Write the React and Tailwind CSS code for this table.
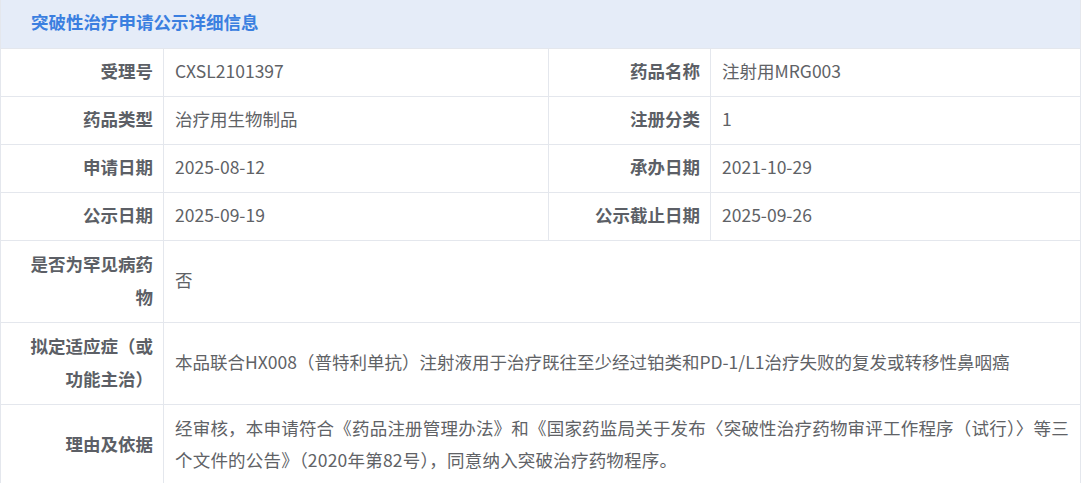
import React from "react";

const font = { fontFamily: '"Noto Sans CJK SC", "Noto Sans", sans-serif' };

function Label({ children, className = "" }) {
  return (
    <div
      className={`flex items-center justify-end text-right border-r border-b border-[#e4e7ed] pl-[20px] pr-[10px] pb-[4px] font-bold text-[#5c5f66] leading-[33px] ${className}`}
    >
      <div>{children}</div>
    </div>
  );
}

function Value({ children, className = "", last = false }) {
  return (
    <div
      className={`flex items-center border-b border-[#e4e7ed] pl-[11px] pr-[8px] pb-[4px] text-[#606266] leading-[32px] ${last ? "" : "border-r"} ${className}`}
    >
      <div>{children}</div>
    </div>
  );
}

export default function App() {
  return (
    <div className="bg-white w-[1089px] h-[483px] overflow-hidden" style={font}>
      <div className="w-[1081px] border-l border-r border-[#e4e7ed] text-[17.5px]">
        <div className="h-[49px] bg-[#e5ecf8] border-b border-[#e4e7ed] flex items-center pl-[30px] pb-[4px] font-bold text-[#3b7fe0] text-[17.5px]">
          突破性治疗申请公示详细信息
        </div>
        <div className="grid grid-cols-[163px_385px_162px_369px] auto-rows-min">
          <Label className="h-[48px]">受理号</Label>
          <Value className="h-[48px]">CXSL2101397</Value>
          <Label className="h-[48px]">药品名称</Label>
          <Value className="h-[48px]" last>注射用MRG003</Value>

          <Label className="h-[48px]">药品类型</Label>
          <Value className="h-[48px]">治疗用生物制品</Value>
          <Label className="h-[48px]">注册分类</Label>
          <Value className="h-[48px]" last>1</Value>

          <Label className="h-[48px]">申请日期</Label>
          <Value className="h-[48px]">2025-08-12</Value>
          <Label className="h-[48px]">承办日期</Label>
          <Value className="h-[48px]" last>2021-10-29</Value>

          <Label className="h-[48px]">公示日期</Label>
          <Value className="h-[48px]">2025-09-19</Value>
          <Label className="h-[48px]">公示截止日期</Label>
          <Value className="h-[48px]" last>2025-09-26</Value>

          <Label className="h-[82px]">是否为罕见病药物</Label>
          <Value className="h-[82px] col-span-3" last>否</Value>

          <Label className="h-[82px]">拟定适应症（或功能主治）</Label>
          <Value className="h-[82px] col-span-3 whitespace-nowrap" last>
            本品联合HX008（普特利单抗）注射液用于治疗既往至少经过铂类和PD-1/L1治疗失败的复发或转移性鼻咽癌
          </Value>

          <Label className="h-[82px]">理由及依据</Label>
          <Value className="h-[82px] col-span-3" last>
            <span className="block whitespace-nowrap tracking-[0.2px]">
              经审核，本申请符合《药品注册管理办法》和《国家药监局关于发布〈突破性治疗药物审评工作程序（试行）〉等三
            </span>
            <span className="block whitespace-nowrap tracking-[0.2px]">
              个文件的公告》（2020年第82号），同意纳入突破治疗药物程序。
            </span>
          </Value>
        </div>
      </div>
    </div>
  );
}
